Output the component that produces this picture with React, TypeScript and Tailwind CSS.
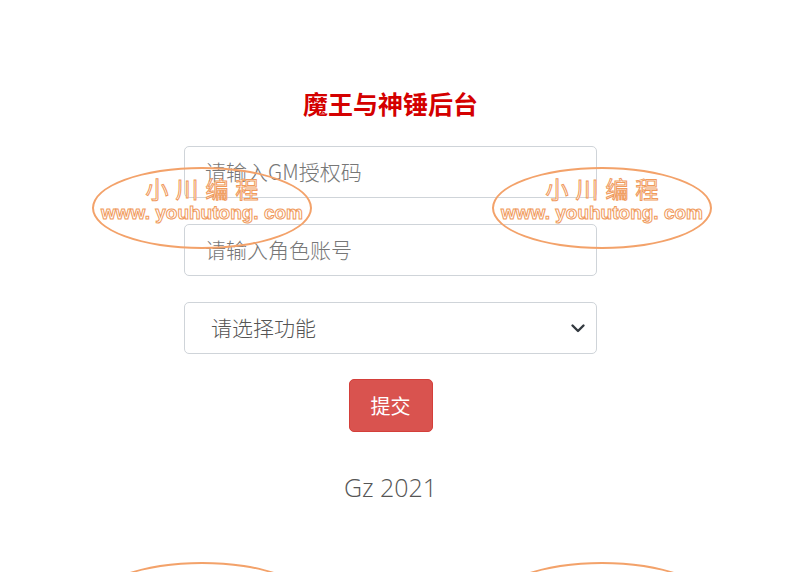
import React from "react";

const Watermark = ({ className, text = true }: { className: string; text?: boolean }) => (
  <div className={"absolute pointer-events-none " + className}>
    <div className="relative w-[220px] h-[82px]">
      <div className="absolute inset-0 rounded-[50%] border-[2px] border-[#f3a26a]" />
      {text && (
        <>
          <div className="absolute left-0 right-0 top-[7px] text-center text-[23px] leading-[28px] tracking-[7px] pl-[7px] text-white [-webkit-text-stroke:1px_#f09a5c]" style={{ fontFamily: '"Noto Sans CJK SC", sans-serif' }}>
            小川编程
          </div>
          <div className="absolute left-0 right-0 top-[35px] text-center text-[19px] leading-[22px] text-white [-webkit-text-stroke:1px_#f09a5c] font-bold whitespace-nowrap" style={{ fontFamily: '"Liberation Sans", Arial, sans-serif' }}>
            www. youhutong. com
          </div>
        </>
      )}
    </div>
  </div>
);

export default function App() {
  return (
    <div className="relative w-[800px] h-[572px] bg-white overflow-hidden" style={{ fontFamily: '"Noto Sans CJK SC", "Open Sans", sans-serif' }}>
      <div className="ml-[184px] w-[413px] pt-[86px] flex flex-col items-center">
        <h1 className="text-[25px] leading-[34px] font-bold text-[#d40000]">魔王与神锤后台</h1>
        <div className="mt-[26px] w-full flex flex-col gap-[26px]">
          <div className="h-[52px] w-full rounded-[5px] border border-[#cfd4d9] flex items-center pl-[20px] text-[21px] font-light text-[#777]">
            请输入GM授权码
          </div>
          <div className="h-[52px] w-full rounded-[5px] border border-[#cfd4d9] flex items-center pl-[20px] text-[21px] font-light text-[#777]">
            请输入角色账号
          </div>
          <div className="h-[52px] w-full rounded-[5px] border border-[#cfd4d9] flex items-center justify-between pl-[26px] pr-[8px] text-[21px] font-light text-[#555]">
            <span>请选择功能</span>
            <svg width="16" height="16" viewBox="0 0 16 16" className="mr-[2px]">
              <path d="M2.5 5.5l5.5 5.5 5.5-5.5" fill="none" stroke="#343a40" strokeWidth="2.4" strokeLinecap="round" strokeLinejoin="round" />
            </svg>
          </div>
        </div>
        <div className="mt-[25px] w-[84px] h-[53px] rounded-[5px] bg-[#d9534f] border border-[#d43f3a] flex items-center justify-center text-white text-[20px]">
          提交
        </div>
        <div className="mt-[38px] text-[25px] leading-[34px] text-[#555] font-light" style={{ fontFamily: '"Open Sans", sans-serif' }}>
          Gz 2021
        </div>
      </div>
      <Watermark className="left-[92px] top-[167px]" />
      <Watermark className="left-[492px] top-[167px]" />
      <Watermark className="left-[92px] top-[562px]" text={false} />
      <Watermark className="left-[492px] top-[562px]" text={false} />
    </div>
  );
}
